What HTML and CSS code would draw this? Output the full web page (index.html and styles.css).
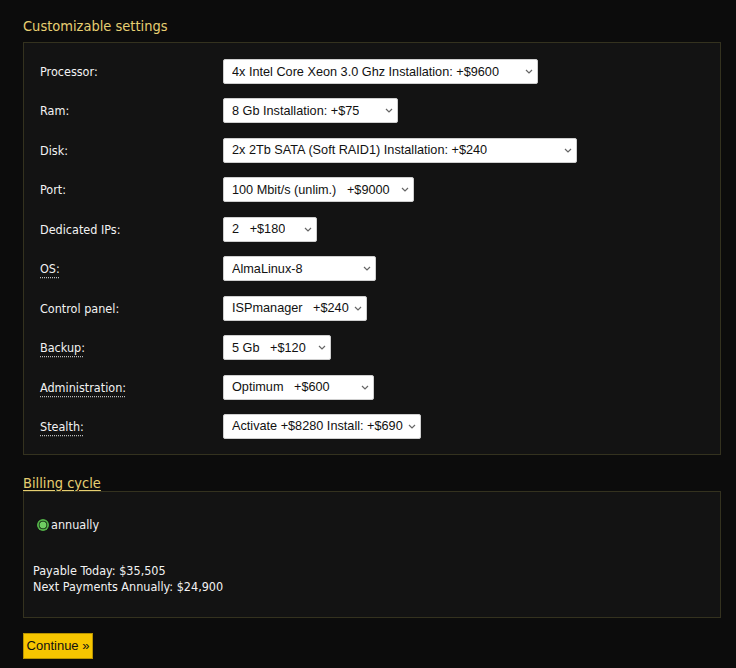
FILE: index.html
```html
<!DOCTYPE html>
<html lang="en">
<head>
<meta charset="utf-8">
<title>Customizable settings</title>
<link rel="stylesheet" href="styles.css">
</head>
<body>
<div class="page">
  <h2 class="section-title">Customizable settings</h2>
  <div class="panel settings">
    <div class="row">
      <span class="label">Processor:</span>
      <div class="select w-proc"><span class="val">4x Intel Core Xeon 3.0 Ghz Installation: +$9600</span><svg class="chev" viewBox="0 0 8 5" width="8" height="5"><path d="M1 1l3 3 3-3" fill="none" stroke="#666" stroke-width="1.2"/></svg></div>
    </div>
    <div class="row">
      <span class="label">Ram:</span>
      <div class="select w-ram"><span class="val">8 Gb Installation: +$75</span><svg class="chev" viewBox="0 0 8 5" width="8" height="5"><path d="M1 1l3 3 3-3" fill="none" stroke="#666" stroke-width="1.2"/></svg></div>
    </div>
    <div class="row">
      <span class="label">Disk:</span>
      <div class="select w-disk"><span class="val">2x 2Tb SATA (Soft RAID1) Installation: +$240</span><svg class="chev" viewBox="0 0 8 5" width="8" height="5"><path d="M1 1l3 3 3-3" fill="none" stroke="#666" stroke-width="1.2"/></svg></div>
    </div>
    <div class="row">
      <span class="label">Port:</span>
      <div class="select w-port"><span class="val">100 Mbit/s (unlim.)&nbsp;&nbsp;&nbsp;+$9000</span><svg class="chev" viewBox="0 0 8 5" width="8" height="5"><path d="M1 1l3 3 3-3" fill="none" stroke="#666" stroke-width="1.2"/></svg></div>
    </div>
    <div class="row">
      <span class="label">Dedicated IPs:</span>
      <div class="select w-ips"><span class="val">2&nbsp;&nbsp;&nbsp;+$180</span><svg class="chev" viewBox="0 0 8 5" width="8" height="5"><path d="M1 1l3 3 3-3" fill="none" stroke="#666" stroke-width="1.2"/></svg></div>
    </div>
    <div class="row">
      <span class="label"><span class="hint">OS:</span></span>
      <div class="select w-os"><span class="val">AlmaLinux-8</span><svg class="chev" viewBox="0 0 8 5" width="8" height="5"><path d="M1 1l3 3 3-3" fill="none" stroke="#666" stroke-width="1.2"/></svg></div>
    </div>
    <div class="row">
      <span class="label">Control panel:</span>
      <div class="select w-cp"><span class="val">ISPmanager&nbsp;&nbsp;&nbsp;+$240</span><svg class="chev" viewBox="0 0 8 5" width="8" height="5"><path d="M1 1l3 3 3-3" fill="none" stroke="#666" stroke-width="1.2"/></svg></div>
    </div>
    <div class="row">
      <span class="label"><span class="hint">Backup:</span></span>
      <div class="select w-backup"><span class="val">5 Gb&nbsp;&nbsp;&nbsp;+$120</span><svg class="chev" viewBox="0 0 8 5" width="8" height="5"><path d="M1 1l3 3 3-3" fill="none" stroke="#666" stroke-width="1.2"/></svg></div>
    </div>
    <div class="row">
      <span class="label"><span class="hint">Administration:</span></span>
      <div class="select w-admin"><span class="val">Optimum&nbsp;&nbsp;&nbsp;+$600</span><svg class="chev" viewBox="0 0 8 5" width="8" height="5"><path d="M1 1l3 3 3-3" fill="none" stroke="#666" stroke-width="1.2"/></svg></div>
    </div>
    <div class="row">
      <span class="label"><span class="hint">Stealth:</span></span>
      <div class="select w-stealth"><span class="val">Activate +$8280 Install: +$690</span><svg class="chev" viewBox="0 0 8 5" width="8" height="5"><path d="M1 1l3 3 3-3" fill="none" stroke="#666" stroke-width="1.2"/></svg></div>
    </div>
  </div>

  <h2 class="section-title link">Billing cycle</h2>
  <div class="panel billing">
    <label class="radio-line"><span class="radio"></span>annually</label>
    <div class="totals">
      <div>Payable Today: $35,505</div>
      <div>Next Payments Annually: $24,900</div>
    </div>
  </div>

  <button class="continue">Continue »</button>
</div>
</body>
</html>
```
FILE: styles.css
```css
html, body {
  margin: 0;
  padding: 0;
  background: #0c0c0c;
}
body {
  color: #f2f2f2;
  font-family: "DejaVu Sans Condensed", "DejaVu Sans", sans-serif;
  font-size: 12.5px;
}
.page {
  width: 698px;
  padding: 16px 0 0 23px;
}
.section-title {
  margin: 0;
  font-family: "DejaVu Sans Condensed", "DejaVu Sans", sans-serif;
  font-weight: normal;
  font-size: 14.5px;
  line-height: 20px;
  color: #e7cf72;
  height: 26px;
}
.section-title.link {
  margin-top: 18px;
  height: 18px;
  line-height: 20px;
  text-decoration: underline;
  text-underline-offset: 2px;
  text-decoration-thickness: 1px;
}
.panel {
  border: 1px solid #34321f;
  background: #131313;
}
.settings {
  padding: 16px 16px 15px 16px;
  display: flex;
  flex-direction: column;
  gap: 14.45px;
}
.row {
  display: grid;
  grid-template-columns: 183px auto;
  align-items: center;
  height: 25px;
}
.label {
  font-size: 12.5px;
  color: #f2f2f2;
}
.hint {
  text-decoration: underline dotted #bbbbbb;
  text-underline-offset: 4px;
}
.select {
  display: flex;
  align-items: center;
  justify-content: space-between;
  gap: 4px;
  height: 25px;
  box-sizing: border-box;
  background: #ffffff;
  border: 1px solid #cfcfcf;
  border-radius: 2px;
  padding: 0 4px 0 8px;
  font-family: "Liberation Sans", Arial, sans-serif;
  font-size: 12.7px;
  color: #111111;
  white-space: nowrap;
}
.val {
  overflow: hidden;
}
.chev {
  flex: none;
}
.w-proc { width: 315px; }
.w-ram { width: 175px; }
.w-disk { width: 354px; }
.w-port { width: 191px; }
.w-ips { width: 94px; }
.w-os { width: 153px; }
.w-cp { width: 144px; }
.w-backup { width: 108px; }
.w-admin { width: 151px; }
.w-stealth { width: 198px; }

.billing {
  padding: 24px 10px 22px 9px;
  height: 127px;
  box-sizing: border-box;
}
.radio-line {
  display: flex;
  align-items: center;
  gap: 2px;
  height: 18px;
  padding-left: 4px;
  font-size: 12.5px;
}
.radio {
  width: 12px;
  height: 12px;
  border-radius: 50%;
  background: radial-gradient(circle, #6fce62 0 3.2px, #244a20 3.6px 4.2px, #52b047 4.6px 6px, transparent 6.2px);
}
.totals {
  margin-top: 29px;
  line-height: 16px;
  font-size: 12.5px;
}
.continue {
  display: block;
  margin-top: 15px;
  height: 26px;
  width: 70px;
  padding: 0;
  background: #f7c600;
  border: 1px solid #b89300;
  font-family: "Liberation Sans", Arial, sans-serif;
  font-size: 13px;
  color: #111111;
}
```
